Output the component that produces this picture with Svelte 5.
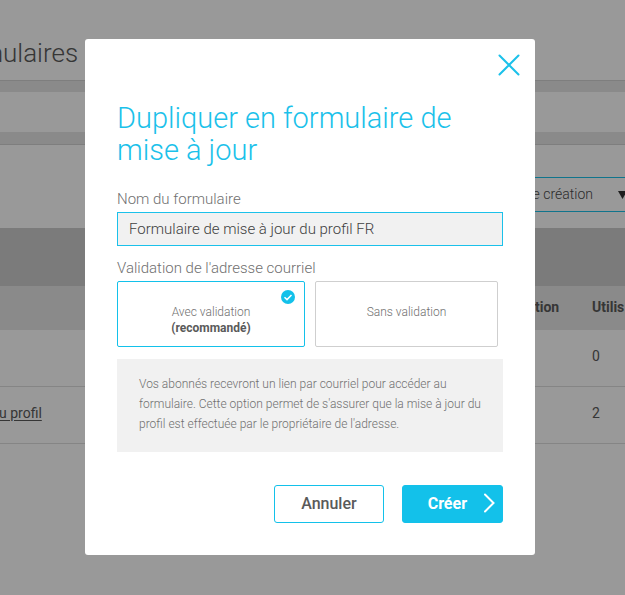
<script>
  let name = $state('Formulaire de mise à jour du profil FR');
  let validation = $state('avec');
</script>

<div class="page">
  <header><h1>mulaires</h1></header>
  <div class="tabs"></div>
  <main>
    <div class="filters">
      <div class="sort">
        <select aria-label="Trier par"><option>Date de création</option></select>
        <svg width="9" height="8" viewBox="0 0 9 8" aria-hidden="true"><path d="M0 0h9L4.500 8z" fill="#333" /></svg>
      </div>
    </div>
    <div class="toolbar"></div>
    <table>
      <thead>
        <tr><th class="title"></th><th class="date">tion</th><th class="use">Utilis</th></tr>
      </thead>
      <tbody>
        <tr><td class="title"></td><td></td><td class="use">0</td></tr>
        <tr><td class="title"><a href="#profil">u profil</a></td><td></td><td class="use">2</td></tr>
      </tbody>
    </table>
  </main>
</div>

<div class="overlay">
  <form class="modal" role="dialog" aria-modal="true" aria-labelledby="dialog-title" onsubmit={(e) => e.preventDefault()}>
    <button class="close" type="button" aria-label="Fermer">
      <svg width="22" height="22" viewBox="0 0 22 22" fill="none" stroke="#1bc1ea" stroke-width="2"><path d="M1.500 1.500l19 19M20.500 1.500l-19 19" stroke-linecap="round" /></svg>
    </button>
    <h2 id="dialog-title">Dupliquer en formulaire de mise à jour</h2>

    <label class="label" for="form-name">Nom du formulaire</label>
    <input id="form-name" class="text" type="text" bind:value={name} />

    <fieldset>
      <legend class="label">Validation de l'adresse courriel</legend>
      <div class="choices">
        <label class="choice" class:selected={validation === 'avec'}>
          <input type="radio" name="validation" value="avec" bind:group={validation} />
          <span>Avec validation</span>
          <strong>(recommandé)</strong>
          {#if validation === 'avec'}{@render tick()}{/if}
        </label>
        <label class="choice" class:selected={validation === 'sans'}>
          <input type="radio" name="validation" value="sans" bind:group={validation} />
          <span>Sans validation</span>
          {#if validation === 'sans'}{@render tick()}{/if}
        </label>
      </div>
    </fieldset>

    <p class="help">
      Vos abonnés recevront un lien par courriel pour accéder au formulaire. Cette option permet de s'assurer que la mise à jour du profil est effectuée par le propriétaire de l'adresse.
    </p>

    <div class="actions">
      <button type="button" class="btn">Annuler</button>
      <button type="submit" class="btn primary">
        Créer
        <svg width="12" height="20" viewBox="0 0 12 20" fill="none" stroke="#fff" stroke-width="2" aria-hidden="true"><path d="M2 1.500L10.500 10 2 18.500" stroke-linecap="round" /></svg>
      </button>
    </div>
  </form>
</div>

{#snippet tick()}
  <svg class="tick" width="14" height="14" viewBox="0 0 14 14" aria-hidden="true">
    <circle cx="7" cy="7" r="7" fill="#13c1ea" />
    <path d="M3.500 7.200l2.500 2.400 4.500-4.600" fill="none" stroke="#fff" stroke-width="1.500" />
  </svg>
{/snippet}

<style>
  :global(body) {
    margin: 0;
    background: #fff;
    overflow: hidden;
  }
  .page,
  .overlay,
  button,
  input,
  select {
    font-family: Roboto, 'Liberation Sans', sans-serif;
  }
  .page {
    min-height: 100vh;
    color: #5a5a5a;
    font-size: 14px;
  }
  header {
    height: 80px;
    border-bottom: 1px solid #d2d2d2;
  }
  h1 {
    margin: 0 0 0 -20px;
    padding-top: 37px;
    font-size: 26px;
    line-height: 32px;
    font-weight: 300;
  }
  .tabs {
    height: 40px;
    border: solid #e6e6e6;
    border-width: 11px 0 12px;
  }
  main {
    border-top: 1px solid #d2d2d2;
  }
  .filters {
    display: flex;
    justify-content: flex-end;
    height: 83px;
    overflow: hidden;
  }
  .sort {
    display: flex;
    align-items: center;
    justify-content: flex-end;
    box-sizing: border-box;
    width: 160px;
    height: 35px;
    margin: 32px -3px 0 0;
    border: 1px solid #1bc1ea;
  }
  .sort select {
    appearance: none;
    border: 0;
    padding: 0 0 2px;
    margin-right: 24px;
    background: none;
    color: #4a4a4a;
    font-size: 14px;
    font-weight: 300;
  }
  .toolbar {
    height: 58px;
    background: #cdcdcd;
  }
  table {
    width: 100%;
    table-layout: fixed;
    border-collapse: collapse;
  }
  th,
  td {
    padding: 0;
    text-align: left;
    white-space: nowrap;
  }
  th {
    height: 42px;
    padding-bottom: 2px;
    background: #e6e6e6;
    font-weight: 700;
  }
  td {
    height: 52px;
    padding-bottom: 4px;
    border-bottom: 1px solid #dedede;
  }
  .use {
    width: 33px;
  }
  .date {
    width: 57px;
  }
  a {
    color: inherit;
    text-underline-offset: 2px;
    margin-left: -1px;
  }
  .overlay {
    position: fixed;
    inset: 0;
    display: flex;
    align-items: flex-start;
    padding: 39px 90px 40px 85px;
    background: rgba(0, 0, 0, 0.4);
    overflow: hidden;
  }
  .modal {
    position: relative;
    flex: 1;
    box-sizing: border-box;
    padding: 63px 32px 32px;
    background: #fff;
    border-radius: 3px;
    color: #707070;
  }
  .close {
    position: absolute;
    top: 15px;
    right: 15px;
    display: flex;
    padding: 0;
    border: 0;
    background: none;
  }
  h2 {
    margin: 0 0 24px;
    color: #1bc1ea;
    font-size: 29px;
    line-height: 32px;
    font-weight: 300;
  }
  .label {
    display: block;
    padding: 0;
    font-size: 15px;
    line-height: 18px;
    font-weight: 300;
  }
  .text {
    box-sizing: border-box;
    width: 100%;
    height: 34px;
    margin: 4px 0 13px;
    padding: 0 11px;
    border: 1px solid #1bc1ea;
    border-radius: 0;
    background: #f1f1f1;
    color: #404040;
    font-size: 15px;
    font-weight: 300;
    outline: 0;
  }
  fieldset {
    margin: 0;
    padding: 0;
    border: 0;
  }
  .choices {
    display: flex;
    gap: 10px;
    margin: 4px 5px 12px 0;
  }
  .choice {
    position: relative;
    flex: 183;
    box-sizing: border-box;
    height: 66px;
    padding-top: 22px;
    border: 1px solid #cfcfcf;
    border-radius: 2px;
    text-align: center;
    font-size: 12px;
    line-height: 16px;
    font-weight: 300;
  }
  .choice.selected {
    flex: 188;
    border-color: #13c1ea;
  }
  .choice input {
    position: absolute;
    opacity: 0;
  }
  .choice strong {
    display: block;
    color: #5a5a5a;
    font-weight: 700;
  }
  .tick {
    position: absolute;
    top: 8px;
    right: 9px;
  }
  .help {
    margin: 0 0 33px;
    padding: 15px 22px 18px;
    background: #f1f1f1;
    font-size: 12px;
    line-height: 20px;
    font-weight: 300;
  }
  .actions {
    display: flex;
    justify-content: flex-end;
    gap: 18px;
  }
  .btn {
    display: flex;
    align-items: center;
    height: 38px;
    padding: 0 26px 2px;
    border: 1px solid #13c1ea;
    border-radius: 3px;
    background: #fff;
    color: #5a5a5a;
    font-size: 16px;
    font-weight: 500;
  }
  .primary {
    gap: 16px;
    padding: 0 7px 2px 25px;
    background: #13c1ea;
    color: #fff;
    font-weight: 700;
  }
</style>
